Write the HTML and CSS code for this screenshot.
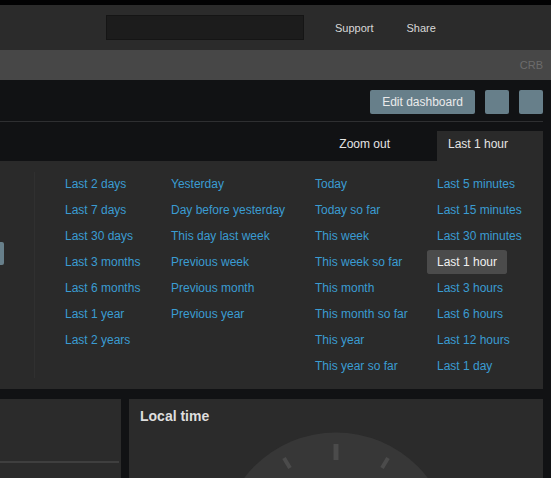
FILE: index.html
```html
<!DOCTYPE html>
<html>
<head>
<meta charset="utf-8">
<link rel="stylesheet" href="styles.css">
</head>
<body>
<div class="topstrip"></div>
<header class="header">
  <div class="search"></div>
  <a class="hlink support">Support</a>
  <a class="hlink share">Share</a>
</header>
<div class="subbar"><span class="crb">CRB</span></div>
<div class="toolbar">
  <button class="btn edit">Edit dashboard</button>
  <button class="btn sq"></button>
  <button class="btn sq"></button>
</div>
<div class="rule"></div>
<div class="timebar">
  <span class="zoom">Zoom out</span>
  <span class="tab">Last 1 hour</span>
</div>
<div class="dropdown">
  <div class="leftcol"><div class="stub"></div></div>
  <div class="divider"></div>
  <div class="opts">
    <ul class="col c1">
      <li>Last 2 days</li><li>Last 7 days</li><li>Last 30 days</li><li>Last 3 months</li><li>Last 6 months</li><li>Last 1 year</li><li>Last 2 years</li>
    </ul>
    <ul class="col c2">
      <li>Yesterday</li><li>Day before yesterday</li><li>This day last week</li><li>Previous week</li><li>Previous month</li><li>Previous year</li>
    </ul>
    <ul class="col c3">
      <li>Today</li><li>Today so far</li><li>This week</li><li>This week so far</li><li>This month</li><li>This month so far</li><li>This year</li><li>This year so far</li>
    </ul>
    <ul class="col c4">
      <li>Last 5 minutes</li><li>Last 15 minutes</li><li>Last 30 minutes</li><li class="active">Last 1 hour</li><li>Last 3 hours</li><li>Last 6 hours</li><li>Last 12 hours</li><li>Last 1 day</li>
    </ul>
  </div>
</div>
<div class="panels">
  <div class="panel left"><div class="bar"></div></div>
  <div class="panel right">
    <div class="ptitle">Local time</div>
    <svg class="clock" width="414" height="80" viewBox="129 399 414 80">
      <circle cx="336" cy="548" r="115.5" fill="#373737"/>
      <line x1="336" y1="444" x2="336" y2="460" stroke="#4b4b4b" stroke-width="5"/>
      <line x1="284" y1="458" x2="290" y2="468" stroke="#4b4b4b" stroke-width="4"/>
      <line x1="388" y1="458" x2="382" y2="468" stroke="#4b4b4b" stroke-width="4"/>
    </svg>
  </div>
</div>
</body>
</html>
```

FILE: styles.css
```css
html, body {
  margin: 0;
  padding: 0;
  background: #111214;
  font-family: "Liberation Sans", Arial, sans-serif;
  overflow: hidden;
  height: 478px;
}
.topstrip {
  height: 5px;
  background: #020203;
}
.header {
  height: 45px;
  background: #2b2b2b;
  display: flex;
  align-items: center;
}
.search {
  margin-left: 106px;
  width: 196px;
  height: 23px;
  background: #1c1c1c;
  border: 1px solid #151515;
}
.hlink {
  font-size: 11px;
  color: #d8d8d8;
}
.support { margin-left: 31px; }
.share { margin-left: 33px; }
.subbar {
  height: 30px;
  background: #474747;
  display: flex;
  align-items: center;
  justify-content: flex-end;
  padding-right: 8px;
}
.crb {
  font-size: 11px;
  color: #6c6c6c;
}
.toolbar {
  height: 41px;
  display: flex;
  justify-content: flex-end;
  align-items: flex-start;
  padding-right: 8px;
  box-sizing: border-box;
  padding-top: 10px;
  gap: 10px;
}
.btn {
  height: 24px;
  border: none;
  border-radius: 2px;
  background: #677f8a;
  color: #eaeaea;
  font-family: "Liberation Sans", Arial, sans-serif;
  font-size: 12px;
  padding: 0;
  margin: 0;
}
.edit {
  width: 105px;
}
.sq {
  width: 24px;
}
.rule {
  height: 1px;
  background: #2e2f31;
  margin-right: 8px;
}
.timebar {
  height: 39px;
  display: flex;
  justify-content: flex-end;
  align-items: flex-end;
  padding-right: 8px;
}
.zoom {
  font-size: 12px;
  color: #e4e4e4;
  height: 30px;
  line-height: 26px;
  margin-right: 47px;
}
.tab {
  width: 106px;
  box-sizing: border-box;
  height: 30px;
  line-height: 26px;
  padding-left: 11px;
  background: #2a2a2a;
  font-size: 12px;
  color: #e4e4e4;
}
.dropdown {
  height: 228px;
  margin-right: 8px;
  background: #2a2a2a;
  display: flex;
}
.leftcol {
  width: 34px;
}
.stub {
  width: 4px;
  height: 23px;
  margin-top: 81px;
  background: #677f8a;
  border-radius: 0 2px 2px 0;
}
.divider {
  width: 1px;
  background: #303030;
  margin: 11px 0;
}
.opts {
  display: flex;
  padding-top: 10px;
}
.col {
  list-style: none;
  margin: 0;
  padding: 0;
}
.col li {
  font-size: 12px;
  line-height: 26px;
  height: 26px;
  color: #3a9cd2;
  white-space: nowrap;
}
.c1 { margin-left: 30px; width: 106px; }
.c2 { width: 144px; }
.c3 { width: 122px; }
.c4 { width: 106px; }
.col li.active {
  background: #4b4b4b;
  background-clip: padding-box;
  border-top: 1px solid transparent;
  border-bottom: 1px solid transparent;
  height: 24px;
  line-height: 24px;
  color: #f0f0f0;
  margin-left: -10px;
  padding-left: 10px;
  width: 70px;
  border-radius: 3px;
}
.panels {
  margin-top: 10px;
  display: flex;
  gap: 8px;
  margin-right: 8px;
}
.panel {
  background: #2b2b2b;
  height: 80px;
  position: relative;
  overflow: hidden;
}
.left {
  width: 121px;
}
.bar {
  margin-top: 62px;
  width: 119px;
  height: 2px;
  background: #3f3f3f;
}
.right {
  flex: 1;
}
.ptitle {
  font-size: 14px;
  font-weight: bold;
  color: #dedede;
  padding: 9px 0 0 11px;
  line-height: 16px;
  position: relative;
  z-index: 1;
}
.clock {
  position: absolute;
  left: 0;
  top: 0;
}
```
